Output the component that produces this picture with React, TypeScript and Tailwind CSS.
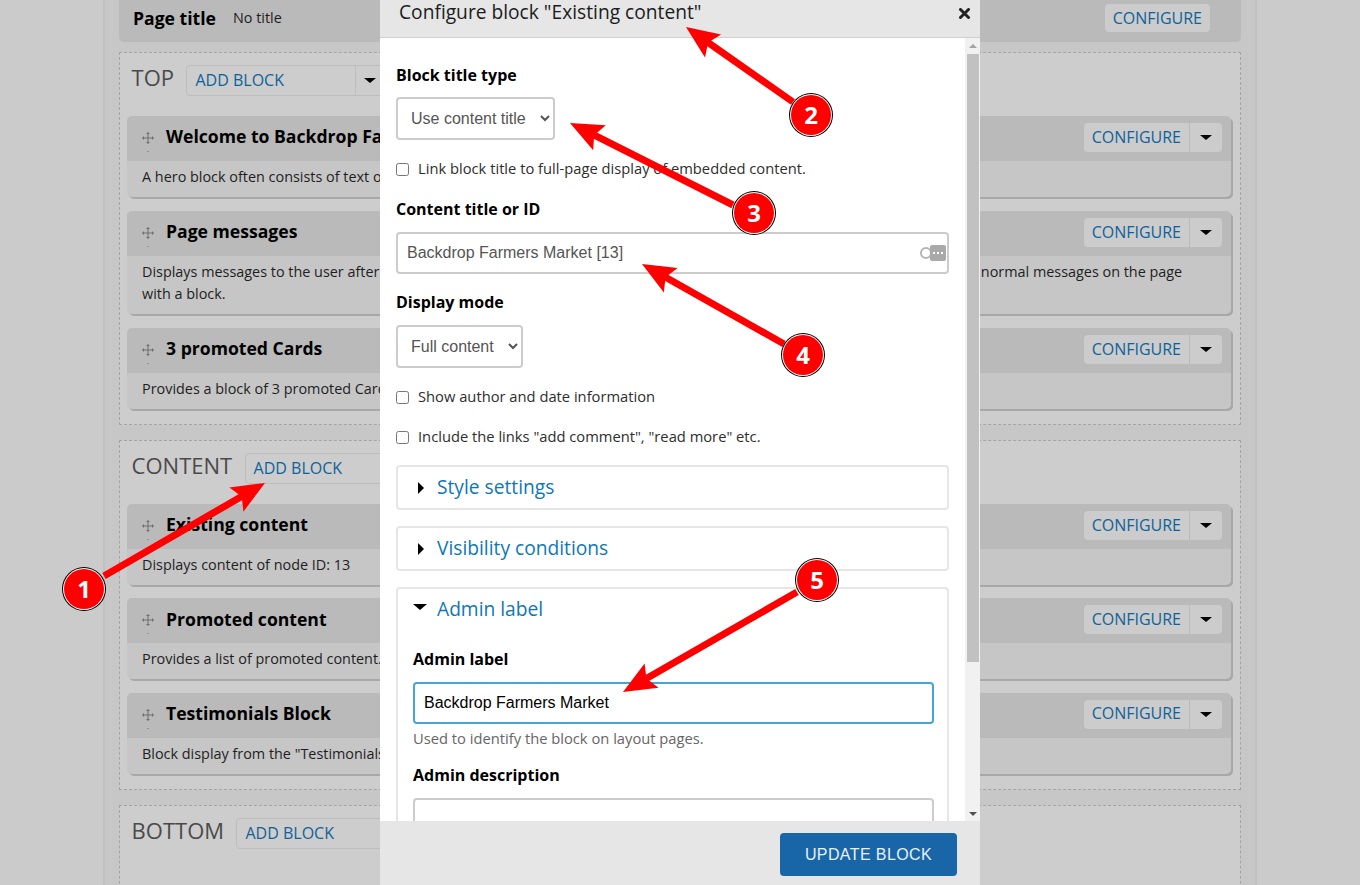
const REGIONS = [
  {
    name: 'TOP',
    className: 'mt-[10px] h-[373px]',
    gap: 'mb-[14px]',
    blocks: [
      { title: 'Welcome to Backdrop Farmers Market', desc: 'A hero block often consists of text over a large background image.' },
      {
        title: 'Page messages',
        desc: 'Displays messages to the user after an action has been taken on the site. If this block is not placed, the system still shows the normal messages on the page with a block.',
      },
      { title: '3 promoted Cards', desc: 'Provides a block of 3 promoted Cards from the site.' },
    ],
  },
  {
    name: 'CONTENT',
    className: 'mt-[15px] h-[350px]',
    gap: 'mb-[13.4px]',
    blocks: [
      { title: 'Existing content', desc: 'Displays content of node ID: 13' },
      { title: 'Promoted content', desc: 'Provides a list of promoted content.' },
      { title: 'Testimonials Block', desc: 'Block display from the "Testimonials" view.' },
    ],
  },
  {
    name: 'BOTTOM',
    className: 'mt-[15px] h-[200px]',
    gap: '',
    blocks: [],
  },
]

const ARROWS = [
  { x1: 104, y1: 576, x2: 265, y2: 483 },
  { x1: 793, y1: 102, x2: 686, y2: 27 },
  { x1: 733, y1: 205, x2: 570, y2: 123 },
  { x1: 784, y1: 344, x2: 642, y2: 264 },
  { x1: 797, y1: 592, x2: 623, y2: 692 },
]

const BADGES = [
  { n: 1, x: 84, y: 589 },
  { n: 2, x: 811, y: 115 },
  { n: 3, x: 754, y: 213 },
  { n: 4, x: 803, y: 355 },
  { n: 5, x: 817, y: 580 },
]

function DragIcon() {
  return (
    <svg width="12" height="20" viewBox="0 0 12 20" className="mt-[9px] shrink-0" fill="none">
      <path d="M6 1.5v9M1 6h10" stroke="#6e6e6e" strokeWidth="1" />
      <path d="M6 0l2 2H4zM6 12l2-2H4zM0 6l2-2v4zM12 6l-2-2v4z" fill="#6e6e6e" />
      <rect x="5.5" y="19" width="1" height="1" fill="#6e6e6e" />
    </svg>
  )
}

function Caret() {
  return <span className="block h-0 w-0 border-x-[6px] border-t-[5px] border-x-transparent border-t-black" />
}

function Block({ title, desc, gap }: { title: string; desc: string; gap: string }) {
  return (
    <div className={`${gap} rounded-[5px] bg-[#c6c6c6] shadow-[2px_2px_0_#a8a8a8]`}>
      <div className="flex h-[45px] items-center rounded-t-[5px] bg-[#bababa] pb-[2px] pl-[15px] pr-[9px]">
        <DragIcon />
        <span className="mb-[2px] ml-[12px] text-[17.6px] font-bold text-black">{title}</span>
        <div className="ml-auto flex h-[29px] items-center rounded-[4px] bg-[#cccccc] text-[16px] text-[#0f6299]">
          <span className="mb-[2px] px-[8px]">CONFIGURE</span>
          <span className="flex h-full w-[33px] items-center justify-center border-l border-[#bababa]">
            <Caret />
          </span>
        </div>
      </div>
      <p className="pb-[9px] pl-[15px] pr-[25px] pt-[5px] text-[14.4px] leading-[22px] text-[#1e1e1e]">{desc}</p>
    </div>
  )
}

function Region({ name, className, gap, blocks }: (typeof REGIONS)[number]) {
  return (
    <section className={`border border-dashed border-[#a4a4a4] pl-[7px] pr-[9px] pt-[12px] ${className}`}>
      <div className="mb-[20px] flex h-[31px] items-center">
        <h2 className="mb-[6px] ml-[4.6px] text-[22px] text-[#4a4a4a]">{name}</h2>
        <div className="ml-[12.4px] flex h-[31px] w-[198px] items-center rounded-[4px] border border-[#bdbdbd] text-[16px] text-[#0f6299]">
          <span className="mb-[2px] px-[8px]">ADD BLOCK</span>
          <span className="ml-auto flex h-full w-[28px] items-center justify-center border-l border-[#bdbdbd]">
            <Caret />
          </span>
        </div>
      </div>
      {blocks.map((b) => (
        <Block key={b.title} gap={gap} {...b} />
      ))}
    </section>
  )
}

function Check({ label, className }: { label: string; className?: string }) {
  return (
    <label className={`flex items-center text-[14.72px] text-[#2e2e2e] ${className ?? ''}`}>
      <input type="checkbox" className="ml-0 mr-[9px] h-[13px] w-[13px]" />
      <span className="mb-[2px]">{label}</span>
    </label>
  )
}

function Field({ title, className }: { title: string; className?: string }) {
  return <div className={`text-[16px] font-bold leading-[22px] text-black ${className ?? ''}`}>{title}</div>
}

function NativeSelect({ value, className }: { value: string; className: string }) {
  return (
    <select
      defaultValue={value}
      className={`h-[43px] rounded-[4px] border-2 border-[#cccccc] bg-white pl-[9px] text-[16px] text-[#555555] ${className}`}
      style={{ fontFamily: '"Liberation Sans", sans-serif' }}
    >
      <option>{value}</option>
    </select>
  )
}

function Collapsed({ title }: { title: string }) {
  return (
    <div className="mb-[16px] flex h-[45px] items-center rounded-[4px] border-2 border-[#e6e6e6] pl-[20px]">
      <span className="block h-0 w-0 border-y-[6px] border-l-[6px] border-y-transparent border-l-black" />
      <span className="ml-[13px] text-[19.2px] text-[#0d77b8]">{title}</span>
    </div>
  )
}

function Modal() {
  return (
    <div className="absolute left-[380px] top-0 flex h-[885px] w-[600px] flex-col bg-white">
      <div className="flex h-[38px] shrink-0 items-center justify-between border-b border-[#cfcfcf] bg-[#e6e6e6] pb-[13px] pl-[19px] pr-[10px]">
        <span className="text-[19.2px] text-[#1c1c1c]">Configure block "Existing content"</span>
        <svg width="11" height="11" viewBox="0 0 11 11" className="mt-[2px]">
          <path d="M1.5 1.5l8 8M9.5 1.5l-8 8" stroke="#222" strokeWidth="3" strokeLinecap="round" />
        </svg>
      </div>
      <div className="flex min-h-0 flex-1">
        <div className="min-w-0 flex-1 overflow-hidden pl-[16px] pr-[16px] pt-[26px]">
          <Field title="Block title type" />
          <NativeSelect value="Use content title" className="mt-[11px] block w-[159px]" />
          <Check label="Link block title to full-page display of embedded content." className="mt-[18px] h-[22px]" />
          <Field title="Content title or ID" className="mt-[18px]" />
          <div className="relative mt-[12px] flex h-[42px] items-center rounded-[4px] border-2 border-[#cccccc] pl-[9px] text-[16px] text-[#555555]" style={{ fontFamily: '"Liberation Sans", sans-serif' }}>
            Backdrop Farmers Market [13]
            <svg width="28" height="17" viewBox="0 0 28 17" className="absolute right-0 top-[10px]">
              <circle cx="7" cy="9" r="5" fill="none" stroke="#b5b5b5" strokeWidth="2" />
              <rect x="11" y="1" width="16" height="16" rx="2" fill="#a9a9a9" />
              <path d="M14 9h2M18 9h2M22 9h2" stroke="#fff" strokeWidth="2" />
            </svg>
          </div>
          <Field title="Display mode" className="mt-[17px]" />
          <NativeSelect value="Full content" className="mt-[12px] block w-[127px]" />
          <Check label="Show author and date information" className="mt-[18px] h-[22px]" />
          <Check label={'Include the links "add comment", "read more" etc.'} className="mt-[18px] h-[22px]" />
          <div className="mt-[17px]">
            <Collapsed title="Style settings" />
            <Collapsed title="Visibility conditions" />
          </div>
          <div className="h-[300px] rounded-t-[4px] border-x-2 border-t-2 border-[#e6e6e6] pl-[15px] pr-[13px]">
            <div className="relative flex h-[40px] items-center">
              <span className="absolute left-0 top-[15px] block h-0 w-0 border-x-[7px] border-t-[6px] border-x-transparent border-t-black" />
              <span className="ml-[24px] text-[19.2px] text-[#0d77b8]">Admin label</span>
            </div>
            <Field title="Admin label" className="mt-[19px]" />
            <div className="mt-[12px] flex h-[42px] items-center rounded-[4px] border-2 border-[#43a5d8] pl-[9px] text-[16px] text-black" style={{ fontFamily: '"Liberation Sans", sans-serif' }}>
              Backdrop Farmers Market
            </div>
            <p className="mt-[3px] text-[14.72px] leading-[22px] text-[#666666]">Used to identify the block on layout pages.</p>
            <Field title="Admin description" className="mt-[15px]" />
            <div className="mt-[12px] h-[80px] rounded-[4px] border-2 border-[#cccccc]" />
          </div>
        </div>
        <div className="flex w-[15px] shrink-0 flex-col items-center bg-[#f1f1f1]">
          <span className="mt-[6px] block h-0 w-0 border-x-[4px] border-b-[4px] border-x-transparent border-b-[#a3a3a3]" />
          <span className="mt-[6px] h-[608px] w-[12px] bg-[#c1c1c1]" />
          <span className="mb-[5px] mt-auto block h-0 w-0 border-x-[4px] border-t-[4px] border-x-transparent border-t-[#505050]" />
        </div>
      </div>
      <div className="flex h-[64px] shrink-0 items-start justify-end bg-[#e6e6e6] pr-[23px] pt-[12px]">
        <button
          className="flex h-[43px] w-[177px] items-center justify-center rounded-[4px] bg-[#1866a8] text-[16px] tracking-[0.4px] text-[#e8f1f8]"
          style={{ fontFamily: '"Liberation Sans", sans-serif' }}
        >
          UPDATE BLOCK
        </button>
      </div>
    </div>
  )
}

function Annotations() {
  return (
    <svg width="1360" height="885" viewBox="0 0 1360 885" className="pointer-events-none absolute left-0 top-0">
      {ARROWS.map((a) => {
        const len = Math.hypot(a.x2 - a.x1, a.y2 - a.y1)
        const ux = (a.x2 - a.x1) / len
        const uy = (a.y2 - a.y1) / len
        const bx = a.x2 - ux * 33
        const by = a.y2 - uy * 33
        const head = `${a.x2},${a.y2} ${bx - uy * 14},${by + ux * 14} ${bx + ux * 6},${by + uy * 6} ${bx + uy * 14},${by - ux * 14}`
        return (
          <g key={a.x2}>
            <line x1={a.x1} y1={a.y1} x2={bx + ux * 8} y2={by + uy * 8} stroke="#ff0000" strokeWidth="7" />
            <polygon points={head} fill="#ff0000" />
          </g>
        )
      })}
      {BADGES.map((b) => (
        <g key={b.n}>
          <circle cx={b.x} cy={b.y} r="22" fill="#000" />
          <circle cx={b.x} cy={b.y} r="21" fill="#fff" />
          <circle cx={b.x} cy={b.y} r="20" fill="#ff0000" />
          <text x={b.x} y={b.y + 9} textAnchor="middle" fontSize="24" fontWeight="700" fill="#fff" fontFamily="'Open Sans', sans-serif">
            {b.n}
          </text>
        </g>
      ))}
    </svg>
  )
}

export default function App() {
  return (
    <div className="relative h-[885px] w-[1360px] overflow-hidden bg-[#cbcbcb]" style={{ fontFamily: '"Open Sans", sans-serif' }}>
      <div className="mx-[103px] h-full border-x-2 border-[#c0c0c0] bg-[#c7c7c7] px-[14px]">
        <div className="flex h-[42px] items-center rounded-b-[5px] bg-[#bababa] pb-[6px] pl-[14px] pr-[31px]">
          <span className="text-[17.6px] font-bold text-black">Page title</span>
          <span className="ml-[17px] text-[14.4px] text-[#1e1e1e]">No title</span>
          <span className="ml-auto flex h-[28px] items-center rounded-[4px] bg-[#cccccc] px-[8px] text-[16px] text-[#0f6299]">CONFIGURE</span>
        </div>
        {REGIONS.map((r) => (
          <Region key={r.name} {...r} className={`${r.className} bg-[#cdcdcd]`} />
        ))}
      </div>
      <Modal />
      <Annotations />
    </div>
  )
}
